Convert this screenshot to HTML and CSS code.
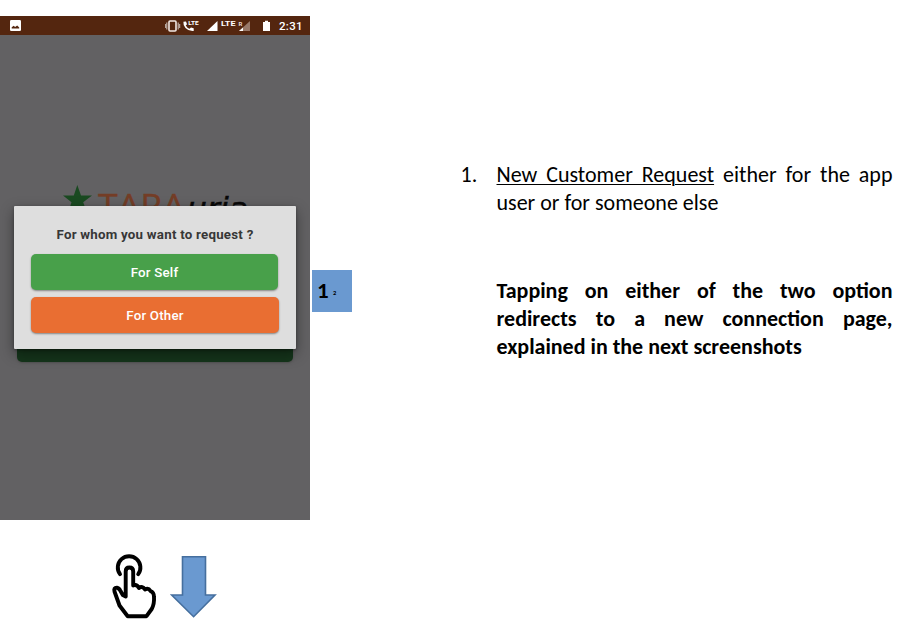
FILE: index.html
```html
<!DOCTYPE html>
<html lang="en">
<head>
<meta charset="utf-8">
<title>New Customer Request</title>
<link rel="stylesheet" href="styles.css">
</head>
<body>
<main class="page">
  <section class="guide">
    <div class="phone">
      <header class="status">
        <svg class="picture-icon" width="11" height="11" viewBox="0 0 11 11"><rect width="11" height="11" rx="1.3" fill="#fff"/><path d="M1.7 8.5V7.3L3.7 5.7 5.1 7 7.2 5.4 9.2 7.4V8.5Z" fill="#54260f"/></svg>
        <svg class="signals" width="110" height="19" viewBox="0 0 110 19">
          <rect x="4" y="5" width="7" height="10" rx="1" fill="none" stroke="#f2e9e5" stroke-width="1.6"/>
          <path d="M1.8 6.5V13.5M13.2 6.5V13.5M.4 8V12M14.6 8V12" stroke="#b7a59c" stroke-width="1.3"/>
          <path d="M18.4 5.7L21 5.4 22 8.3 20.7 9.6Q22 12 24.6 12.8L26 11.4 28.7 12.3V15Q23.8 15.5 20.5 12 18 9 18.4 5.7Z" fill="#fff"/>
          <text x="23.3" y="8.8" class="lte-small" textLength="10.5" lengthAdjust="spacingAndGlyphs">LTE</text>
          <path d="M42 15L52.5 5V15Z" fill="#fff"/>
          <text x="56" y="10.3" class="lte" textLength="14.5" lengthAdjust="spacingAndGlyphs">LTE</text>
          <text x="73.4" y="10.3" class="roaming">R</text>
          <path d="M74 15L85 5V15Z" fill="#98796a"/><path d="M74 15L78 11.4V15Z" fill="#fff"/>
          <path d="M98 6H100V4.8H103V6H105V15H98Z" fill="#fff"/>
        </svg>
        <span class="clock">2:31</span>
      </header>
      <svg class="brand" width="310" height="40" viewBox="0 0 310 40">
        <path d="M77.3 4L81 14.5H92L83.2 21.2 87 32 77.3 25.2 68 32 71.5 21.2 63 14.5H73.8Z" fill="#1a4a21"/>
        <text x="98" y="36.8" class="brand-tara" textLength="87" lengthAdjust="spacingAndGlyphs">TARA</text>
        <text x="187" y="36.5" class="brand-uria" textLength="61" lengthAdjust="spacingAndGlyphs">uria</text>
      </svg>
      <div class="covered-button"></div>
      <div class="dialog">
        <h1 class="question"><span>For whom you want to request ?</span></h1>
        <div class="choice self"><span>For Self</span></div>
        <div class="choice other"><span>For Other</span></div>
      </div>
    </div>
    <svg class="gestures" width="130" height="75" viewBox="100 545 130 75">
      <g fill="none" stroke="#000" stroke-width="3.9" stroke-linecap="round" stroke-linejoin="round">
        <path d="M120 574.2A11.3 11.3 0 1 1 138.2 574.2"/>
        <path d="M125.7 596.5V571.5Q125.7 567.5 129.4 567.5Q133.2 567.5 133.2 571.5V585.5Q136.8 584 139 588Q142.4 585.5 145 589.5Q148.4 587.6 150.5 591Q154 592 154 597Q154.5 604 151.7 609L146.5 616.2H127.7L119.5 605.5Q117 598.5 114.5 591.5Q113.4 587.5 117 587.7Q119 588 120.5 591L122.8 595Z"/>
      </g>
      <path d="M182.5 556.8H205.5V595H215L193.6 616.7L171.7 595H182.5Z" fill="#6a99d0" stroke="#456f9e" stroke-width="1.6"/>
    </svg>
  </section>
  <aside class="marker"><b>1</b><small>2</small></aside>
  <section class="notes">
    <div class="item">
      <span class="number">1.</span>
      <p class="copy"><span class="line"><u>New Customer Request</u> either for the app</span><span class="line l2">user or for someone else</span></p>
    </div>
    <p class="copy strong"><span class="line">Tapping on either of the two option</span><span class="line">redirects to a new connection page,</span><span class="line l3">explained in the next screenshots</span></p>
  </section>
</main>
</body>
</html>
```
FILE: styles.css
```css
* { box-sizing: border-box; }
body { margin: 0; background: #fff; color: #000; overflow: hidden; }
.page { width: 902px; height: 620px; display: grid; grid-template-columns: 310px 42px 1fr; }
.guide { padding-top: 16px; }
.phone { position: relative; height: 504px; background: #626163; overflow: hidden; font-family: Roboto, sans-serif; }
.status { height: 19px; background: #54260f; display: flex; align-items: center; padding: 0 7px 0 10px; color: #fff; }
.signals { margin-left: 144px; flex: none; }
.picture-icon { flex: none; }
.clock { margin-left: 4px; padding-top: 1px; font-size: 11.5px; font-weight: 500; line-height: 19px; letter-spacing: .3px; white-space: nowrap; }
.lte-small { font: 700 6px Roboto, sans-serif; fill: #fff; }
.lte { font: 700 7.5px Roboto, sans-serif; fill: #fff; }
.roaming { font: 700 6px Roboto, sans-serif; fill: #e8dcd6; }
.brand { display: block; margin-top: 146px; }
.brand-tara { font: 33px "Open Sans", sans-serif; fill: #743d26; stroke: #743d26; stroke-width: .3px; }
.brand-uria { font: italic 29px "DejaVu Sans", sans-serif; fill: #080808; stroke: #080808; stroke-width: .5px; }
.covered-button { width: 276px; height: 45px; margin: 96px 0 0 17px; background: #15351b; border-radius: 5px; box-shadow: 0 1px 2px #4448; }
.dialog { position: absolute; left: 14px; top: 190px; width: 282px; height: 143px; padding: 20px 17px 16px; background: #dedede; border-radius: 1px; box-shadow: 0 5px 14px #0006, 0 1px 3px #0005; }
.question { margin: 0 0 11px; text-align: center; font-size: 13.3px; line-height: 17px; font-weight: 700; color: #373737; white-space: nowrap; letter-spacing: .24px; }
.choice { display: flex; align-items: center; justify-content: center; height: 36px; border-radius: 5px; color: #fff; font-size: 13.3px; font-weight: 500; letter-spacing: .2px; box-shadow: 0 1px 2px #0006; }
.self { width: 247px; background: #48a04a; margin-bottom: 7px; }
.other { width: 248px; background: #e96e32; }
.gestures { display: block; margin: 25px 0 0 100px; }
.marker { align-self: start; width: 40px; height: 42px; margin: 270px 0 0 2px; padding-left: 5px; background: #6a99d0; display: flex; align-items: center; font-family: Carlito, Lato, sans-serif; }
.marker b { width: 13px; font-size: 23px; line-height: 40px; margin-top: -2px; }
.marker small { margin: 3px 0 0 3px; font-size: 6.5px; font-weight: 700; }
.notes { padding: 161px 9.5px 0 108.5px; font-family: Carlito, Lato, sans-serif; font-size: 22px; line-height: 28px; }
.item { display: flex; }
.number { width: 36px; flex: none; }
.copy { margin: 0; width: 396px; }
.line { display: block; text-align: justify; text-align-last: justify; white-space: nowrap; }
.l2 { width: 221.5px; }
.l3 { width: 305px; }
.strong { margin: 60px 0 0 36px; font-weight: 700; }
u { text-decoration-thickness: 1px; text-underline-offset: 2px; }
```
